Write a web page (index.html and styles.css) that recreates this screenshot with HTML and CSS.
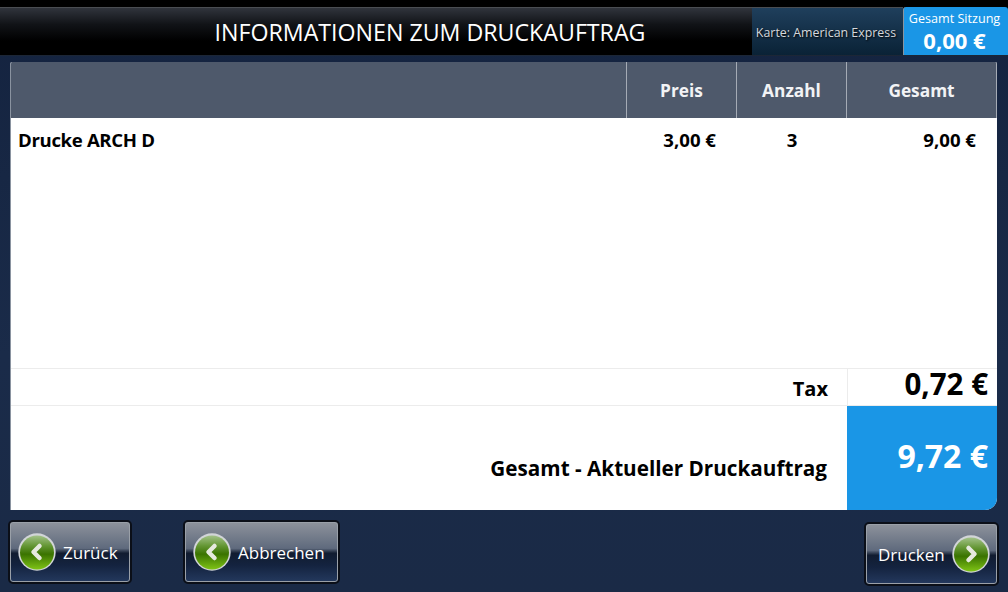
FILE: index.html
```html
<!DOCTYPE html>
<html lang="de">
<head>
  <meta charset="UTF-8">
  <title>Informationen zum Druckauftrag</title>
  <link rel="stylesheet" href="styles.css">
</head>
<body>
  <div class="topbar">
    <div class="title">INFORMATIONEN ZUM DRUCKAUFTRAG</div>
    <div class="card-info">Karte: American Express</div>
    <div class="session">
      <div class="session-label">Gesamt Sitzung</div>
      <div class="session-value">0,00 €</div>
    </div>
  </div>

  <div class="panel">
    <div class="row head">
      <div class="col-name"></div>
      <div class="col-price">Preis</div>
      <div class="col-qty">Anzahl</div>
      <div class="col-total">Gesamt</div>
    </div>
    <div class="items">
      <div class="row item">
        <div class="col-name">Drucke ARCH D</div>
        <div class="col-price">3,00 €</div>
        <div class="col-qty">3</div>
        <div class="col-total">9,00 €</div>
      </div>
    </div>
    <div class="sum tax">
      <div class="sum-label">Tax</div>
      <div class="sum-value">0,72 €</div>
    </div>
    <div class="sum grand">
      <div class="sum-label">Gesamt - Aktueller Druckauftrag</div>
      <div class="sum-value">9,72 €</div>
    </div>
  </div>

  <div class="actions">
    <button class="btn btn-back">
      <svg class="orb" viewBox="0 0 38 38"><use href="#orb"></use><path class="chev" d="M21.5 13 L15.5 19 L21.5 25"/></svg>
      Zurück
    </button>
    <button class="btn btn-cancel">
      <svg class="orb" viewBox="0 0 38 38"><use href="#orb"></use><path class="chev" d="M21.5 13 L15.5 19 L21.5 25"/></svg>
      Abbrechen
    </button>
    <button class="btn btn-next">
      Drucken
      <svg class="orb" viewBox="0 0 38 38"><use href="#orb"></use><path class="chev" d="M16.5 13 L22.5 19 L16.5 25"/></svg>
    </button>
  </div>

  <svg class="defs" width="0" height="0">
    <defs>
      <linearGradient id="orbFill" x1="0" y1="0" x2="0" y2="1">
        <stop offset="0" stop-color="#a3c289"/>
        <stop offset="0.3" stop-color="#659735"/>
        <stop offset="0.55" stop-color="#3a7300"/>
        <stop offset="1" stop-color="#7fc416"/>
      </linearGradient>
      <g id="orb">
        <circle cx="19" cy="19" r="18.7" fill="#d2d5d8"/>
        <circle cx="19" cy="19.5" r="17" fill="url(#orbFill)"/>
      </g>
    </defs>
  </svg>
</body>
</html>
```
FILE: styles.css
```css
* {
  margin: 0;
  padding: 0;
  box-sizing: border-box;
  font-family: 'Open Sans', 'Noto Sans', sans-serif;
}

body {
  width: 1008px;
  height: 592px;
  overflow: hidden;
  display: flex;
  flex-direction: column;
  background: linear-gradient(to bottom, #14233f, #1a2b49 60%, #1a2a46);
}

.topbar {
  height: 56px;
  padding-top: 7px;
  background: #000;
  display: flex;
  border-bottom: 1px solid #1c2636;
}

.title {
  flex: 1;
  display: flex;
  align-items: center;
  justify-content: center;
  padding-left: 108px;
  color: #fff;
  font-size: 23.2px;
  background: linear-gradient(to bottom, #30343c, #111317 35%, #000 70%);
  border-top: 1px solid #4a4d52;
}

.card-info {
  width: 151px;
  padding: 2px 3px 0 0;
  display: flex;
  align-items: center;
  justify-content: center;
  color: #d5d8dc;
  font-size: 12.4px;
  background: linear-gradient(to bottom, #1f3f5c, #0a2236);
  border-top: 1px solid #4a4d52;
  text-shadow: 1px 1px 2px #000;
}

.session {
  width: 105px;
  padding-right: 3px;
  background: #1a96e6;
  color: #fff;
  text-align: center;
  border-left: 1px solid #8a949e;
  border-top-left-radius: 3px;
  border-top-right-radius: 3px;
}

.session-label {
  font-size: 12.6px;
  line-height: 16px;
  margin-top: 4px;
}

.session-value {
  font-size: 22px;
  font-weight: 700;
  line-height: 22px;
  margin-top: 2px;
}

.panel {
  margin: 6px 11px 0 10px;
  height: 448px;
  background: #fff;
  display: flex;
  flex-direction: column;
  border-left: 1px solid #8a93a0;
  border-radius: 2px 2px 12px 0;
  overflow: hidden;
}

.row {
  display: flex;
}

.col-name {
  width: 616px;
  padding-left: 7px;
}

.col-price,
.col-qty,
.col-total {
  text-align: center;
}

.col-price,
.col-qty {
  width: 110px;
}

.col-total {
  width: 150px;
}

.head {
  height: 56px;
  background: #4e596b;
  color: #f2f3f5;
  font-size: 17.3px;
  font-weight: 700;
}

.head > div {
  display: flex;
  align-items: center;
  justify-content: center;
  border-right: 1px solid #a5abb5;
}

.items {
  flex: 1;
}

.item {
  padding-top: 10px;
  color: #000;
  font-size: 18.6px;
  font-weight: 700;
  line-height: 23px;
}

.item .col-name {
  letter-spacing: -0.35px;
}

.item .col-price,
.item .col-total {
  text-align: right;
  padding-right: 21px;
}

.sum {
  display: flex;
  border-top: 1px solid #ececec;
}

.sum-label {
  flex: 1;
  text-align: right;
  padding-right: 20px;
  font-weight: 700;
  color: #000;
}

.sum-value {
  width: 150px;
  text-align: right;
  padding-right: 9px;
  font-weight: 700;
}

.tax {
  height: 37px;
}

.tax .sum-label {
  font-size: 20px;
  padding-top: 4px;
  padding-right: 19px;
  line-height: 32px;
}

.tax .sum-value {
  font-size: 29.5px;
  line-height: 29px;
  border-left: 1px solid #ececec;
  color: #000;
}

.grand {
  height: 105px;
}

.grand .sum-label {
  font-size: 20.7px;
  padding-top: 47px;
  line-height: 30px;
}

.grand .sum-value {
  background: #1a96e6;
  color: #fff;
  font-size: 32px;
  padding-top: 25px;
  line-height: 50px;
}

.actions {
  display: flex;
  padding: 10px 9px 0 8px;
}

.btn {
  height: 64px;
  display: flex;
  align-items: center;
  gap: 7px;
  padding: 0 8px;
  color: #fff;
  font-size: 17px;
  border: 2px solid #0b0f18;
  border-radius: 5px;
  box-shadow: inset 0 0 0 1px #9aa0a8;
  background: linear-gradient(to bottom, #8e939c, #5f6a7d 44%, #111c30 52%, #14233f 72%, #24395e);
  cursor: pointer;
}

.btn-back {
  width: 124px;
}

.btn-cancel {
  width: 157px;
  margin-left: 51px;
}

.btn-next {
  width: 135px;
  margin-left: auto;
  margin-top: 2px;
  padding: 0 8px 0 12px;
  justify-content: space-between;
}

.orb {
  width: 38px;
  height: 38px;
  flex: none;
}

.chev {
  fill: none;
  stroke: #e6e9df;
  stroke-width: 4.5;
  stroke-linejoin: round;
  stroke-linecap: round;
}

.defs {
  position: absolute;
}
```
